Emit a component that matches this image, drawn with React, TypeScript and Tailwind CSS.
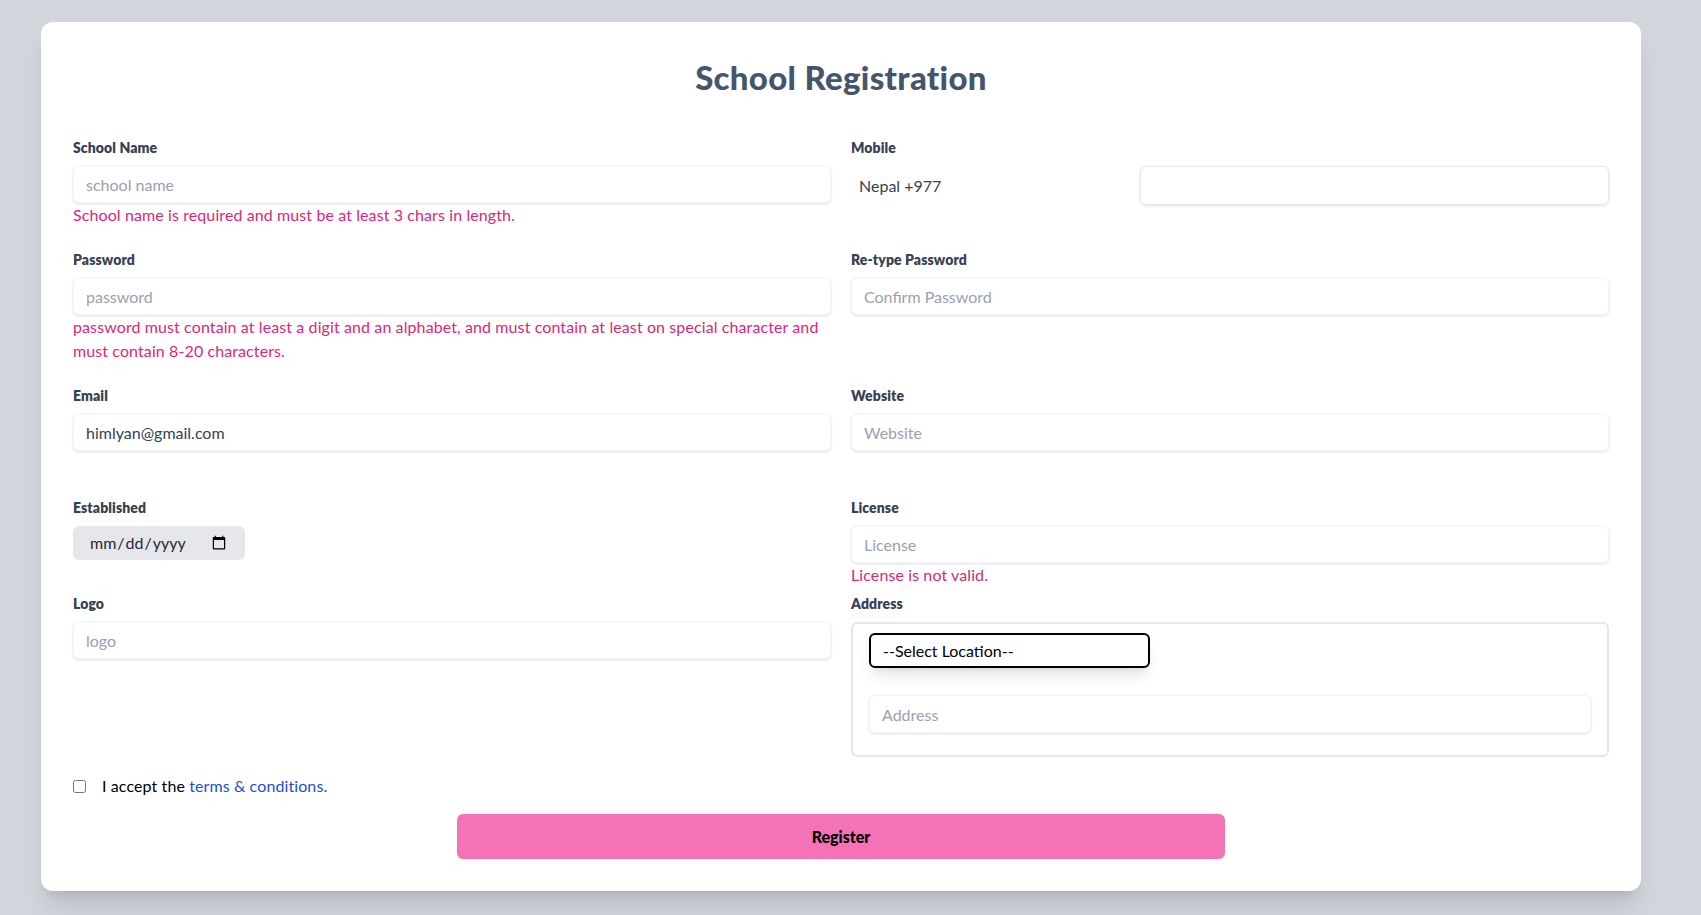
import React from "react";

function Label({ children }: { children: React.ReactNode }) {
  return <label className="block text-sm leading-5 font-extrabold text-gray-700 mb-2 tracking-[0.1px]">{children}</label>;
}

function TextInput({ placeholder, value }: { placeholder?: string; value?: string }) {
  return (
    <input
      className="block w-full h-[37px] rounded-md border border-gray-100 shadow-[0_1px_3px_rgba(0,0,0,0.12)] px-3 text-base text-gray-700 placeholder:text-gray-400 outline-none bg-white"
      placeholder={placeholder}
      defaultValue={value}
    />
  );
}

function Err({ children }: { children: React.ReactNode }) {
  return <p className="text-base leading-6 text-[#db2777] tracking-[0.1px]">{children}</p>;
}

export default function App() {
  return (
    <div
      className="min-h-screen bg-gray-300 pt-[22px] pl-[41px] pb-[23px]"
      style={{ fontFamily: "Lato, 'Liberation Sans', sans-serif" }}
    >
      <div className="w-[1600px] bg-white rounded-xl shadow-xl p-8">
        <h1 className="text-center text-[33px] leading-9 font-black text-slate-600 pt-[5px] mb-[43px] tracking-[0.3px]">
          School Registration
        </h1>

        {/* Row 1 */}
        <div className="grid grid-cols-2 gap-x-5 items-start mb-[23px]">
          <div>
            <Label>School Name</Label>
            <TextInput placeholder="school name" />
            <Err>School name is required and must be at least 3 chars in length.</Err>
          </div>
          <div>
            <Label>Mobile</Label>
            <div className="flex items-center gap-[10px]">
              <select className="appearance-none w-[279px] h-[39px] bg-transparent px-2 text-base text-gray-700 outline-none">
                <option>Nepal +977</option>
              </select>
              <input className="flex-1 h-[39px] rounded-md border border-gray-200 shadow-[0_1px_3px_rgba(0,0,0,0.12)] px-3 outline-none" />
            </div>
          </div>
        </div>

        {/* Row 2 */}
        <div className="grid grid-cols-2 gap-x-5 items-start mb-[23px]">
          <div>
            <Label>Password</Label>
            <TextInput placeholder="password" />
            <Err>
              password must contain at least a digit and an alphabet, and must contain at least on special character and
              must contain 8-20 characters.
            </Err>
          </div>
          <div>
            <Label>Re-type Password</Label>
            <TextInput placeholder="Confirm Password" />
          </div>
        </div>

        {/* Row 3 */}
        <div className="grid grid-cols-2 gap-x-5 items-start mb-[47px]">
          <div>
            <Label>Email</Label>
            <TextInput value="himlyan@gmail.com" />
          </div>
          <div>
            <Label>Website</Label>
            <TextInput placeholder="Website" />
          </div>
        </div>

        {/* Row 4 */}
        <div className="grid grid-cols-2 gap-x-5 items-start mb-[7px]">
          <div>
            <Label>Established</Label>
            <input
              type="date"
              className="block w-[172px] h-[34px] rounded-md bg-gray-200 px-4 text-base text-gray-800 outline-none"
            />
          </div>
          <div>
            <Label>License</Label>
            <TextInput placeholder="License" />
            <Err>License is not valid.</Err>
          </div>
        </div>

        {/* Row 5 */}
        <div className="grid grid-cols-2 gap-x-5 items-start mb-[17px]">
          <div>
            <Label>Logo</Label>
            <TextInput placeholder="logo" />
          </div>
          <div>
            <Label>Address</Label>
            <div className="border-2 border-gray-200 rounded-md px-4 pt-[9px] pb-[22px]">
              <select className="appearance-none block w-[281px] h-[35px] border-2 border-black rounded-md shadow-lg px-3 text-base text-black bg-white outline-none">
                <option>--Select Location--</option>
              </select>
              <input
                className="block w-full mt-[27px] h-[38px] rounded-md border border-gray-100 shadow-[0_1px_3px_rgba(0,0,0,0.12)] px-3 text-base placeholder:text-gray-400 outline-none"
                placeholder="Address"
              />
            </div>
          </div>
        </div>

        {/* Terms */}
        <div className="flex items-center h-6 mb-[16px]">
          <input type="checkbox" className="w-[13px] h-[13px]" />
          <span className="ml-4 text-base text-black tracking-[0.1px]">
            I accept the <a className="text-[#1d4ed8]">terms &amp; conditions.</a>
          </span>
        </div>

        <button className="block w-1/2 mx-auto h-[45px] rounded-md bg-[#f472b6] text-base font-black text-black">
          Register
        </button>
      </div>
    </div>
  );
}
